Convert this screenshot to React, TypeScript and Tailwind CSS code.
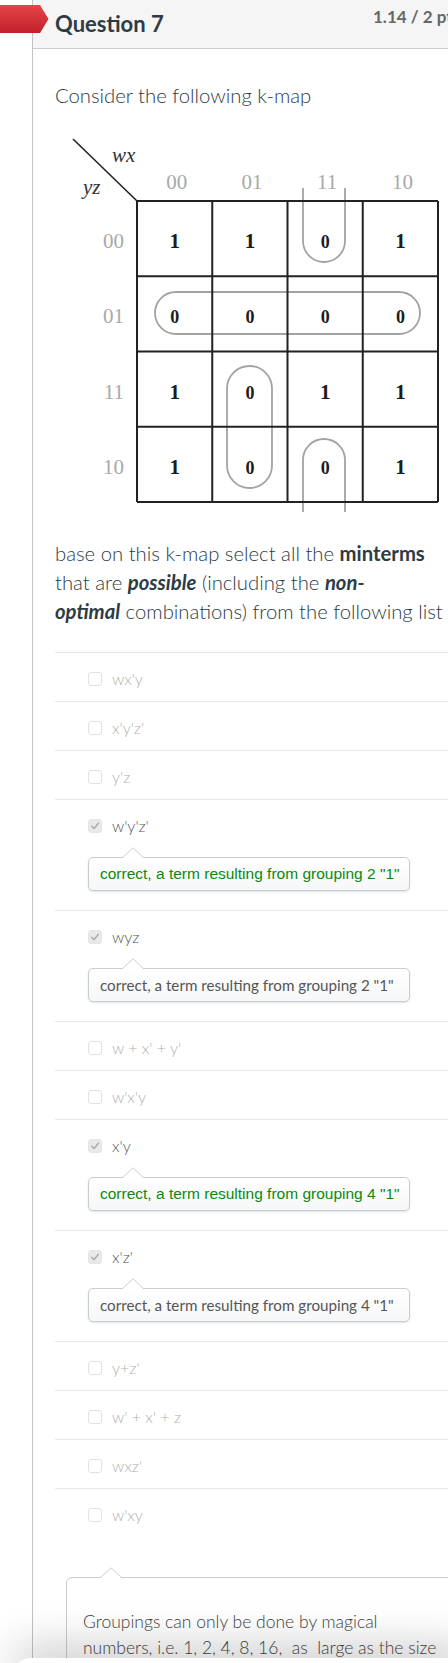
import React from "react";

type Answer = {
  text: string;
  checked?: boolean;
  feedback?: string;
  green?: boolean;
};

const answers: Answer[] = [
  { text: "wx'y" },
  { text: "x'y'z'" },
  { text: "y'z" },
  { text: "w'y'z'", checked: true, feedback: 'correct, a term resulting from grouping 2 "1"', green: true },
  { text: "wyz", checked: true, feedback: 'correct, a term resulting from grouping 2 "1"' },
  { text: "w + x' + y'" },
  { text: "w'x'y" },
  { text: "x'y", checked: true, feedback: 'correct, a term resulting from grouping 4 "1"', green: true },
  { text: "x'z'", checked: true, feedback: 'correct, a term resulting from grouping 4 "1"' },
  { text: "y+z'" },
  { text: "w' + x' + z" },
  { text: "wxz'" },
  { text: "w'xy" },
];

const kmap = [
  ["1", "1", "0", "1"],
  ["0", "0", "0", "0"],
  ["1", "0", "1", "1"],
  ["1", "0", "0", "1"],
];

const labels = ["00", "01", "11", "10"];

function KMap() {
  const x0 = 82;
  const y0 = 77;
  const c = 75.25;
  const serif = "'Liberation Serif', 'DejaVu Serif', serif";
  return (
    <svg width="390" height="395" viewBox="0 0 390 395" className="mt-[14px] block">
      {/* corner */}
      <line x1="18" y1="15" x2={x0} y2={y0} stroke="#222" strokeWidth="1.6" />
      <text x="57" y="38" fontFamily={serif} fontStyle="italic" fontSize="21" fill="#333">wx</text>
      <text x="28" y="70" fontFamily={serif} fontStyle="italic" fontSize="21" fill="#333">yz</text>

      {labels.map((l, i) => (
        <text key={"c" + l} x={x0 + c * i + c / 2 + 2} y="65" textAnchor="middle" fontFamily={serif} fontSize="21" fill="#a8a8a8">
          {l}
        </text>
      ))}
      {labels.map((l, i) => (
        <text key={"r" + l} x="69" y={y0 + c * i + 47} textAnchor="end" fontFamily={serif} fontSize="21" fill="#a8a8a8">
          {l}
        </text>
      ))}

      {/* groupings */}
      <g fill="none" stroke="#a3a3a3" strokeWidth="1.8">
        <path d="M248 64 V117 A21 21 0 0 0 290 117 V64" />
        <rect x="100" y="168" width="265" height="42" rx="21" />
        <rect x="172" y="242" width="45" height="122" rx="22.5" />
        <path d="M248 388 V336 A21 21 0 0 1 290 336 V388" />
      </g>

      {/* grid */}
      <g stroke="#222" strokeWidth="2">
        {[0, 1, 2, 3, 4].map((i) => (
          <line key={"v" + i} x1={x0 + c * i} y1={y0} x2={x0 + c * i} y2={y0 + c * 4} />
        ))}
        {[0, 1, 2, 3, 4].map((i) => (
          <line key={"h" + i} x1={x0} y1={y0 + c * i} x2={x0 + c * 4} y2={y0 + c * i} />
        ))}
      </g>

      {kmap.map((row, r) =>
        row.map((v, k) => (
          <text
            key={r + "-" + k}
            x={x0 + c * k + c / 2}
            y={y0 + c * r + 47}
            textAnchor="middle"
            fontFamily={serif}
            fontWeight="bold"
            fontSize={v === "1" ? 21 : 18}
            fill="#1c1c1c"
          >
            {v}
          </text>
        ))
      )}
    </svg>
  );
}

function Checkbox({ checked }: { checked?: boolean }) {
  return (
    <span
      className={
        checked
          ? "flex h-[14px] w-[14px] shrink-0 items-center justify-center rounded-[3px] border border-[#e3e5e7] bg-[#e8e9ea]"
          : "flex h-[14px] w-[14px] shrink-0 items-center justify-center rounded-[3px] border border-[#dfe1e3] bg-white"
      }
    >
      {checked && (
        <svg width="10" height="10" viewBox="0 0 10 10">
          <path d="M1.8 5.2 L4 7.6 L8.4 2.2" fill="none" stroke="#a9a9a9" strokeWidth="1.4" strokeLinecap="round" strokeLinejoin="round" />
        </svg>
      )}
    </span>
  );
}

function Arrow() {
  return (
    <svg width="22" height="11" viewBox="0 0 22 11" className="absolute left-[33px] top-[-11px]">
      <polygon points="0,11.5 11,0.8 22,11.5" fill="#ffffff" />
      <polyline points="0,11 11,0.8 22,11" fill="none" stroke="#c7cdd1" strokeWidth="1" />
    </svg>
  );
}

function Feedback({ text, green }: { text: string; green?: boolean }) {
  return (
    <div className="relative mt-[24px] flex h-[34px] w-[322px] items-center rounded-[5px] border border-[#c7cdd1] bg-linear-to-b from-white to-[#f6f7f8] px-[11px] shadow-[0_1px_2px_rgba(0,0,0,0.12)]">
      <Arrow />
      {green ? (
        <span className="whitespace-nowrap font-['Liberation_Sans',Arial,sans-serif] text-[15.5px] text-[#0b8a0b]">{text}</span>
      ) : (
        <span className="whitespace-nowrap text-[15.2px] text-[#555]">{text}</span>
      )}
    </div>
  );
}

export default function App() {
  return (
    <div className="relative h-[1663px] overflow-hidden bg-white font-[Lato,'Liberation_Sans',sans-serif]">
      {/* red flag */}
      <svg width="49" height="28" viewBox="0 0 49 28" className="absolute left-0 top-[5px] z-10">
        <defs>
          <linearGradient id="flag" x1="0" y1="0" x2="0" y2="1">
            <stop offset="0" stopColor="#e8434a" />
            <stop offset="1" stopColor="#bf2229" />
          </linearGradient>
        </defs>
        <polygon points="0,0 40,0 48.5,14 40,28 0,28" fill="url(#flag)" />
      </svg>

      <div className="ml-[32px] w-[440px] border-l border-[#bfc3c7]">
        {/* header */}
        <div className="flex h-[49px] items-start border-b border-[#c7cdd1] bg-[#f5f5f5] pl-[22px] pr-[4px]">
          <h2 className="mt-[11px] flex-1 text-[22px] font-bold leading-[26px] text-[#2d3b45]">Question 7</h2>
          <span className="mt-[8px] w-[95px] shrink-0 whitespace-nowrap text-[17px] font-bold leading-[17px] text-[#666]">1.14 / 2 pts</span>
        </div>

        {/* body */}
        <div className="px-[22px]">
          <p className="pt-[32px] text-[20.3px] font-light leading-[29px] text-[#2d3b45]">Consider the following k-map</p>

          <KMap />

          <p className="mt-[20px] mb-[26px] whitespace-nowrap text-[20.3px] font-light leading-[29px] text-[#2d3b45]">
            base on this k-map select all the <strong className="font-bold">minterms</strong>
            <br />
            that are <strong className="font-bold italic">possible</strong> (including the{" "}
            <strong className="font-bold italic">non-</strong>
            <br />
            <strong className="font-bold italic">optimal</strong> combinations) from the following list
          </p>

          <div>
            {answers.map((a) => (
              <div
                key={a.text}
                className={
                  a.feedback
                    ? "border-t border-[#e6e8ea] pt-[19px] pb-[19px] pl-[33px]"
                    : "border-t border-[#e6e8ea] pt-[19px] pb-[15px] pl-[33px]"
                }
              >
                <div className="flex h-[14px] items-center gap-[10px]">
                  <Checkbox checked={a.checked} />
                  <span
                    className={
                      a.checked
                        ? "whitespace-pre text-[16px] font-light leading-none text-[#555]"
                        : "whitespace-pre text-[16px] font-light leading-none text-[#b0b0b0]"
                    }
                  >
                    {a.text}
                  </span>
                </div>
                {a.feedback && <Feedback text={a.feedback} green={a.green} />}
              </div>
            ))}
          </div>

          {/* general feedback */}
          <div className="relative mt-[40px] ml-[11px] w-[420px] rounded-tl-[6px] border border-[#c7cdd1] bg-white px-[16px] pt-[31px] pb-[40px]">
            <Arrow />
            <p className="whitespace-nowrap text-[17.5px] font-light leading-[26px] text-[#444]">
              Groupings can only be done by magical
              <br />
              numbers, i.e. 1, 2, 4, 8, 16, {"\u00a0"}as {"\u00a0"}large as the size
            </p>
          </div>
        </div>
      </div>

      {/* bottom sheet peeking in */}
      <div className="absolute bottom-[-19px] left-[14px] right-[-20px] h-[24px] rounded-tl-[16px] bg-white shadow-[0_-6px_45px_rgba(0,0,0,0.32)]" />
    </div>
  );
}
